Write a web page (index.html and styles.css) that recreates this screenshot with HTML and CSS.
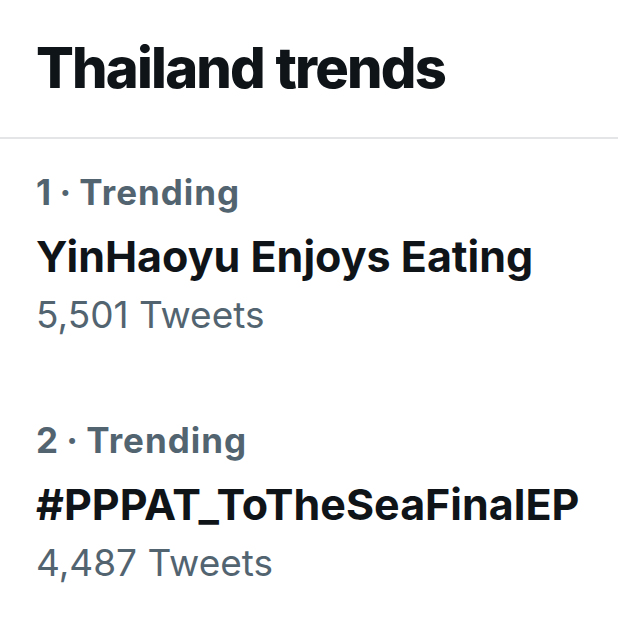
FILE: index.html
```html
<!DOCTYPE html>
<html>
<head>
<meta charset="utf-8">
<link rel="stylesheet" href="styles.css">
</head>
<body>
<div class="panel">
  <header class="header">
    <h1 class="title">Thailand trends</h1>
  </header>
  <div class="trend">
    <div class="meta">1 · Trending</div>
    <div class="name">YinHaoyu Enjoys Eating</div>
    <div class="count">5,501 Tweets</div>
  </div>
  <div class="trend">
    <div class="meta">2 · Trending</div>
    <div class="name">#PPPAT_ToTheSeaFinalEP</div>
    <div class="count">4,487 Tweets</div>
  </div>
</div>
</body>
</html>
```
FILE: styles.css
```css
html, body {
  margin: 0;
  padding: 0;
  background: #ffffff;
}
body {
  font-family: Inter, "Liberation Sans", sans-serif;
  color: #0f1419;
}
.panel {
  width: 618px;
  height: 618px;
  overflow: hidden;
}
.header {
  padding: 36px 36px 0 36px;
  height: 101px;
  border-bottom: 2px solid #e3e5e7;
}
.title {
  margin: 0;
  font-size: 56px;
  line-height: 64px;
  font-weight: 800;
  letter-spacing: -1.8px;
  word-spacing: 1px;
}
.trend {
  padding: 29px 36px 48px 36px;
}
.meta {
  font-size: 35px;
  line-height: 48px;
  font-weight: 700;
  color: #536471;
  letter-spacing: 1px;
  word-spacing: -2px;
}
.name {
  margin-top: 10px;
  font-size: 43px;
  line-height: 60px;
  font-weight: 700;
  color: #0f1419;
}
.count {
  margin-top: 5px;
  font-size: 37px;
  line-height: 48px;
  font-weight: 400;
  color: #536471;
}
```
